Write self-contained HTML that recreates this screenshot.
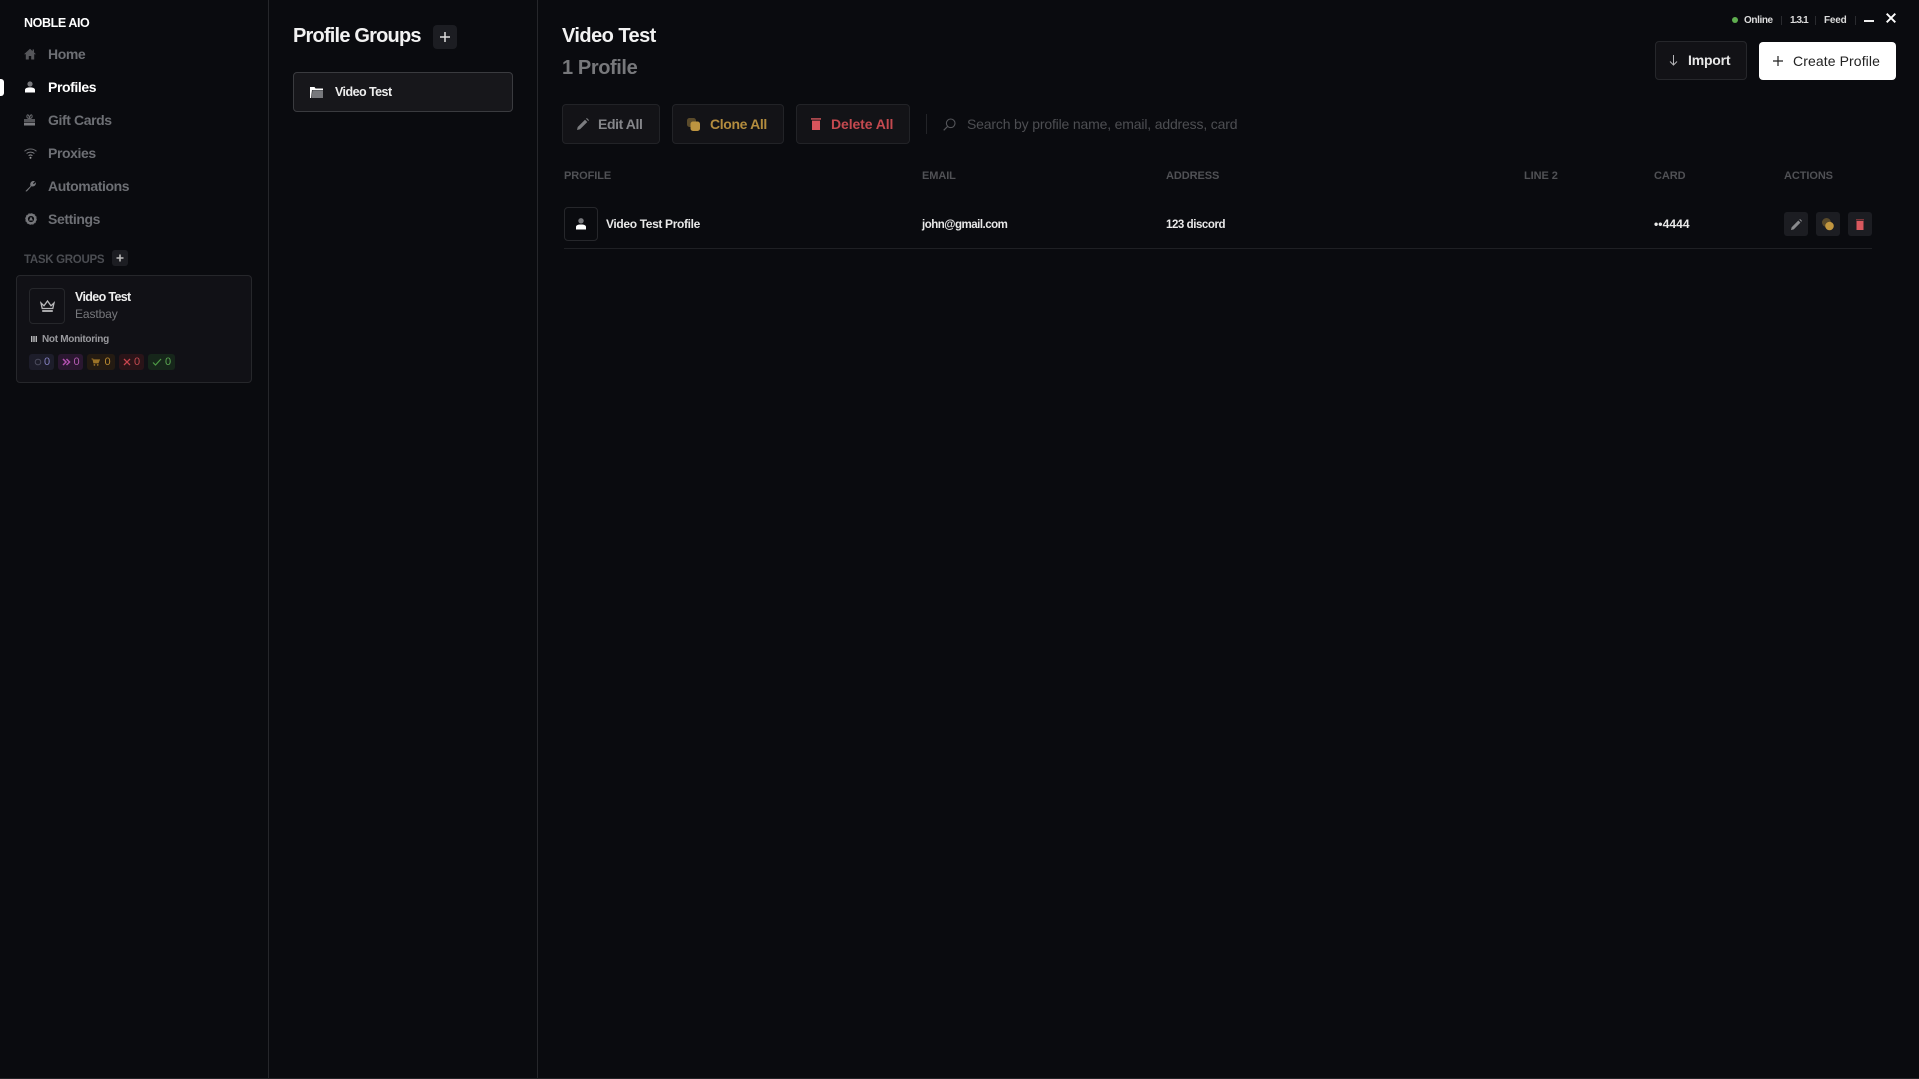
<!DOCTYPE html>
<html><head><meta charset="utf-8"><title>Noble AIO</title>
<style>
html,body{margin:0;padding:0;background:#0a0b0f;width:1919px;height:1079px;overflow:hidden}
body{font-family:"Liberation Sans",sans-serif;position:relative}
.a,.t,svg{position:absolute}
.t{white-space:nowrap;line-height:20px;height:20px}
.b{font-weight:bold}
.box{box-sizing:border-box;border-radius:4px}
.nav{font-size:14px;font-weight:bold;color:#6d6f74;left:48px;letter-spacing:-.4px}
.th{font-size:11px;color:#505155;font-weight:bold;letter-spacing:-.08px}
.td{font-size:11.5px;color:#e8e8e8;font-weight:bold;letter-spacing:-.45px}
.btn{top:104px;height:40px;background:#131317;border:1px solid #222327}
.act{top:212px;width:24px;height:24px;background:#1c1d22;border-radius:3px}
.bd{top:354px;height:16px;border-radius:3px}
.bt{font-size:11px;top:352px}
.sm{font-size:10px;font-weight:bold;color:#dcdcdc;top:11px;letter-spacing:-.4px}
.sep{width:1px;height:9px;top:16px;background:#2a2b2f}
</style></head><body>
<div class="a" style="left:268px;top:0;width:1px;height:1079px;background:#26272b"></div>
<div class="a" style="left:537px;top:0;width:1px;height:1079px;background:#26272b"></div>
<div class="a" style="left:0;top:1078px;width:1919px;height:1px;background:#232427"></div>

<!-- Sidebar -->
<div class="t b" style="left:24px;top:13px;font-size:12.5px;color:#fff;letter-spacing:-.4px">NOBLE AIO</div>
<div class="a" style="left:0;top:79px;width:4px;height:17px;background:#fff;border-radius:0 3px 3px 0"></div>

<svg style="left:24px;top:48px" width="12" height="12" viewBox="0 0 12 12"><path d="M6 .8L0 6.2h1.8V11.5h3V8h2.4v3.5h3V6.2H12L10 4.4V1.5H8.6v1.6z" fill="#55565a"/></svg>
<div class="t nav" style="top:44px">Home</div>

<svg style="left:24px;top:81px" width="12" height="12" viewBox="0 0 12 12"><circle cx="6" cy="3" r="2.6" fill="#77787c"/><path d="M1 11.5V9c0-1.5 1.6-2.6 5-2.6s5 1.100 5 2.600v2.500z" fill="#fff"/></svg>
<div class="t nav" style="top:77px;color:#fff">Profiles</div>

<svg style="left:24px;top:114px" width="12" height="12" viewBox="0 0 12 12"><path d="M0 5h11v3.500H0z" fill="#55565a"/><path d="M0 9h11v2.500H0z" fill="#7c7d81"/><path d="M5.500 4.500C3 4.500 2.500 3 3 1.500S5 1 5.500 4zM5.500 4.500C8 4.500 8.500 3 8 1.500S6 1 5.500 4z" fill="none" stroke="#66676b" stroke-width="1"/></svg>
<div class="t nav" style="top:110px">Gift Cards</div>

<svg style="left:24px;top:148px" width="13" height="11" viewBox="0 0 13 11"><path d="M.5 3.300C3.800.300 9.200.300 12.500 3.300" fill="none" stroke="#66676b" stroke-width="1"/><path d="M2.600 5.500C4.800 3.600 8.200 3.600 10.400 5.500" fill="none" stroke="#77787c" stroke-width="1"/><path d="M4.600 7.700C5.700 6.800 7.300 6.800 8.400 7.700" fill="none" stroke="#88898d" stroke-width="1"/><circle cx="6.500" cy="9.800" r="1" fill="#999"/></svg>
<div class="t nav" style="top:143px">Proxies</div>

<svg style="left:25px;top:180px" width="12" height="12" viewBox="0 0 12 12"><path d="M1 11.500L.5 11l5-5C4.800 4 5.500 1.500 8 1c.8-.1 1.400 0 2 .3L8 3.300l.8 1 2-2c.4 2-.6 4-3 4.200-.5 0-.9 0-1.300-.2l-4.500 5z" fill="#77787c"/></svg>
<div class="t nav" style="top:176px">Automations</div>

<svg style="left:25px;top:213px" width="12" height="12" viewBox="0 0 12 12"><circle cx="6" cy="6" r="4.300" fill="none" stroke="#77787c" stroke-width="2.400"/><circle cx="6" cy="6" r="5.400" fill="none" stroke="#66676b" stroke-width="1" stroke-dasharray="1.600 1.200"/><path d="M6 3.500L8 7.500H4z" fill="#77787c"/></svg>
<div class="t nav" style="top:209px">Settings</div>

<div class="t" style="left:24px;top:250px;font-size:11.5px;color:#4b4d52;letter-spacing:-.3px;font-weight:bold">TASK GROUPS</div>
<div class="a" style="left:112px;top:250px;width:16px;height:16px;background:#1c1d22;border-radius:3px"></div>
<svg style="left:116px;top:254px" width="8" height="8" viewBox="0 0 8 8"><path d="M4 .5v7M.5 4h7" stroke="#bbb" stroke-width="1.600"/></svg>

<div class="a box" style="left:16px;top:275px;width:236px;height:108px;background:#111116;border:1px solid #26272b"></div>
<div class="a box" style="left:29px;top:288px;width:36px;height:36px;border:1px solid #26272b"></div>
<svg style="left:40px;top:300px" width="15" height="13" viewBox="0 0 15 13"><path d="M1 3l3 2.800L7.500 1 11 5.800 14 3l-1.200 5.500H2.200z" fill="none" stroke="#b9b9bb" stroke-width="1.300"/><path d="M2.200 11h10.600" stroke="#b9b9bb" stroke-width="1.800"/></svg>
<div class="t b" style="left:75px;top:287px;font-size:12.500px;color:#eee;letter-spacing:-.65px">Video Test</div>
<div class="t" style="left:75px;top:304px;font-size:12px;color:#77787c;letter-spacing:-.1px">Eastbay</div>
<svg style="left:31px;top:336px" width="6" height="6" viewBox="0 0 6 6"><path d="M.8 0v6M3 0v6M5.200 0v6" stroke="#fff" stroke-width="1"/></svg>
<div class="t b" style="left:42px;top:330px;font-size:10px;color:#9a9a9e;letter-spacing:-.3px">Not Monitoring</div>

<div class="a bd" style="left:29px;width:25px;background:#1d1d2a"></div>
<svg style="left:34px;top:358px" width="8" height="8"><circle cx="4" cy="4" r="2.800" fill="none" stroke="#4a4a5c" stroke-width="1"/></svg>
<div class="t bt" style="left:44px;color:#8480c0">0</div>
<div class="a bd" style="left:58px;width:25px;background:#2a1730"></div>
<svg style="left:62px;top:358px" width="9" height="8" viewBox="0 0 9 8"><path d="M1 1l3 3-3 3M4.500 1l3 3-3 3" fill="none" stroke="#b24fb0" stroke-width="1.500"/></svg>
<div class="t bt" style="left:73.500px;color:#b45cb2">0</div>
<div class="a bd" style="left:87px;width:28px;background:#241b12"></div>
<svg style="left:91px;top:358px" width="9" height="8" viewBox="0 0 10 9"><path d="M.5 1H2l1 4.500h5L9.500 2H2.500" fill="#9a7227" stroke="#9a7227"/><circle cx="3.800" cy="7.800" r="1" fill="#9a7227"/><circle cx="7.500" cy="7.800" r="1" fill="#9a7227"/></svg>
<div class="t bt" style="left:104.500px;color:#b98a30">0</div>
<div class="a bd" style="left:119px;width:25px;background:#2a1418"></div>
<svg style="left:123px;top:358px" width="8" height="8" viewBox="0 0 8 8"><path d="M1 1l6 6M7 1L1 7" stroke="#c8454e" stroke-width="1.300"/></svg>
<div class="t bt" style="left:134px;color:#c24a50">0</div>
<div class="a bd" style="left:148px;width:27px;background:#16261a"></div>
<svg style="left:152px;top:358px" width="10" height="8" viewBox="0 0 10 8"><path d="M1 4.500L3.500 7 9 1" fill="none" stroke="#4d9a45" stroke-width="1.200"/></svg>
<div class="t bt" style="left:165px;color:#5ba752">0</div>

<!-- Profile groups -->
<div class="t b" style="left:293px;top:26px;font-size:20px;color:#f2f2f2;letter-spacing:-.8px">Profile Groups</div>
<div class="a" style="left:433px;top:25px;width:24px;height:24px;background:#1c1d22;border-radius:4px"></div>
<svg style="left:440px;top:32px" width="10" height="10" viewBox="0 0 10 10"><path d="M5 0v10M0 5h10" stroke="#ddd" stroke-width="1.500"/></svg>
<div class="a box" style="left:293px;top:72px;width:220px;height:40px;background:#17171b;border:1px solid #3a3b3f"></div>
<svg style="left:310px;top:87px" width="13" height="11" viewBox="0 0 13 11"><path d="M0 0h4.500l1 1.500H13V3H2L1 11H0z" fill="#fff"/><path d="M2.500 3.200H13V11H1.500z" fill="#77787c"/></svg>
<div class="t b" style="left:335px;top:82px;font-size:12.500px;color:#eee;letter-spacing:-.55px">Video Test</div>

<!-- Header -->
<div class="t b" style="left:562px;top:26px;font-size:20px;color:#f2f2f2;letter-spacing:-.55px">Video Test</div>
<div class="t b" style="left:562px;top:58px;font-size:20px;color:#77787b;letter-spacing:-.4px">1 Profile</div>

<div class="a btn box" style="left:562px;width:98px"></div>
<svg style="left:577px;top:118px" width="12" height="12" viewBox="0 0 12 12"><path d="M0 12l.7-3L8 1.700l2.300 2.300L3 11.300zM9 .7l.9-.7 2.100 2.100-.7.900z" fill="#7c7d80"/></svg>
<div class="t b" style="left:598px;top:114px;font-size:14px;color:#85868a;letter-spacing:-.4px">Edit All</div>

<div class="a btn box" style="left:672px;width:112px"></div>
<svg style="left:687px;top:118px" width="14" height="14" viewBox="0 0 14 14"><rect x="0" y="0" width="9" height="9" rx="2.500" fill="#5a4a2a"/><rect x="3.500" y="3.500" width="9.500" height="9.500" rx="2.500" fill="#bd9440"/></svg>
<div class="t b" style="left:710px;top:114px;font-size:14px;color:#b38c3e;letter-spacing:-.36px">Clone All</div>

<div class="a btn box" style="left:796px;width:114px"></div>
<svg style="left:811px;top:118px" width="10" height="12" viewBox="0 0 10 12"><path d="M0 0h10v1.800H0z" fill="#a9474c"/><path d="M1 2.600h8V12H1z" fill="#d9545c"/></svg>
<div class="t b" style="left:831px;top:114px;font-size:14px;color:#c4494f;letter-spacing:-.1px">Delete All</div>

<div class="a" style="left:926px;top:114px;width:1px;height:20px;background:#232428"></div>
<svg style="left:943px;top:118px" width="13" height="13" viewBox="0 0 13 13"><circle cx="7.700" cy="5.300" r="4.300" fill="none" stroke="#55565a" stroke-width="1.100"/><path d="M4.500 8.500L.7 12.300" stroke="#55565a" stroke-width="1.200"/></svg>
<div class="t" style="left:967px;top:114px;font-size:14px;color:#4d4e52;letter-spacing:-.17px">Search by profile name, email, address, card</div>

<!-- Table -->
<div class="t th" style="left:564px;top:166px">PROFILE</div>
<div class="t th" style="left:922px;top:166px">EMAIL</div>
<div class="t th" style="left:1166px;top:166px">ADDRESS</div>
<div class="t th" style="left:1524px;top:166px">LINE 2</div>
<div class="t th" style="left:1654px;top:166px">CARD</div>
<div class="t th" style="left:1784px;top:166px">ACTIONS</div>

<div class="a box" style="left:564px;top:207px;width:34px;height:34px;border:1px solid #26272b"></div>
<svg style="left:576px;top:218px" width="10" height="12" viewBox="0 0 10 12"><circle cx="5" cy="2.800" r="2.700" fill="#77787c"/><path d="M0 11.500V9c0-1.500 1.400-2.500 5-2.500s5 1 5 2.500v2.500z" fill="#fff"/></svg>
<div class="t td" style="left:606px;top:214px;font-size:12px;letter-spacing:-.35px">Video Test Profile</div>
<div class="t td" style="left:922px;top:215px;letter-spacing:-.5px">john@gmail.com</div>
<div class="t td" style="left:1166px;top:215px;letter-spacing:-.44px">123 discord</div>
<div class="t td" style="left:1654px;top:214px;font-size:12px;letter-spacing:.1px">••4444</div>
<div class="a" style="left:564px;top:248px;width:1308px;height:1px;background:#1f2024"></div>

<div class="a act" style="left:1784px"></div>
<svg style="left:1791px;top:219px" width="11" height="11" viewBox="0 0 12 12"><path d="M0 12l.7-3L8 1.700l2.300 2.300L3 11.300zM9 .7l.9-.7 2.100 2.100-.7.900z" fill="#8a8b8e"/></svg>
<div class="a act" style="left:1816px"></div>
<svg style="left:1821px;top:218px" width="14" height="14" viewBox="0 0 14 14"><circle cx="5.500" cy="4.500" r="4.500" fill="#5a4a2a"/><circle cx="8.500" cy="8" r="4.300" fill="#c1963f"/></svg>
<div class="a act" style="left:1848px"></div>
<svg style="left:1856px;top:219px" width="8" height="11" viewBox="0 0 8 11"><path d="M0 0h8v1.500H0z" fill="#7a3438"/><path d="M.5 2h7v9h-7z" fill="#d9585e"/></svg>

<!-- Top right -->
<div class="a" style="left:1732px;top:17px;width:6px;height:6px;border-radius:50%;background:#5fae4f"></div>
<div class="t sm" style="left:1744px">Online</div>
<div class="a sep" style="left:1781px"></div>
<div class="t sm" style="left:1790px;letter-spacing:-.9px">1.3.1</div>
<div class="a sep" style="left:1815px"></div>
<div class="t sm" style="left:1824px;letter-spacing:-.2px">Feed</div>
<div class="a sep" style="left:1855px"></div>
<div class="a" style="left:1864px;top:20px;width:10px;height:2px;background:#eee"></div>
<svg style="left:1886px;top:13px" width="10" height="10" viewBox="0 0 10 10"><path d="M.7.700l8.600 8.600M9.300.700L.7 9.300" stroke="#fff" stroke-width="1.900"/></svg>

<div class="a box" style="left:1655px;top:41px;width:92px;height:39px;background:#121216;border:1px solid #26272b"></div>
<svg style="left:1669px;top:55px" width="9" height="11" viewBox="0 0 9 11"><path d="M4.500 0v10M1 6.500L4.500 10 8 6.500" fill="none" stroke="#b5b5b7" stroke-width="1"/></svg>
<div class="t b" style="left:1688px;top:50px;font-size:14px;color:#e8e8e8;letter-spacing:-.2px">Import</div>
<div class="a box" style="left:1759px;top:42px;width:137px;height:38px;background:#fff"></div>
<svg style="left:1773px;top:56px" width="10" height="10" viewBox="0 0 10 10"><path d="M5 0v10M0 5h10" stroke="#222" stroke-width="1.200"/></svg>
<div class="t" style="left:1793px;top:51px;font-size:14px;color:#222;letter-spacing:.1px">Create Profile</div>
</body></html>
